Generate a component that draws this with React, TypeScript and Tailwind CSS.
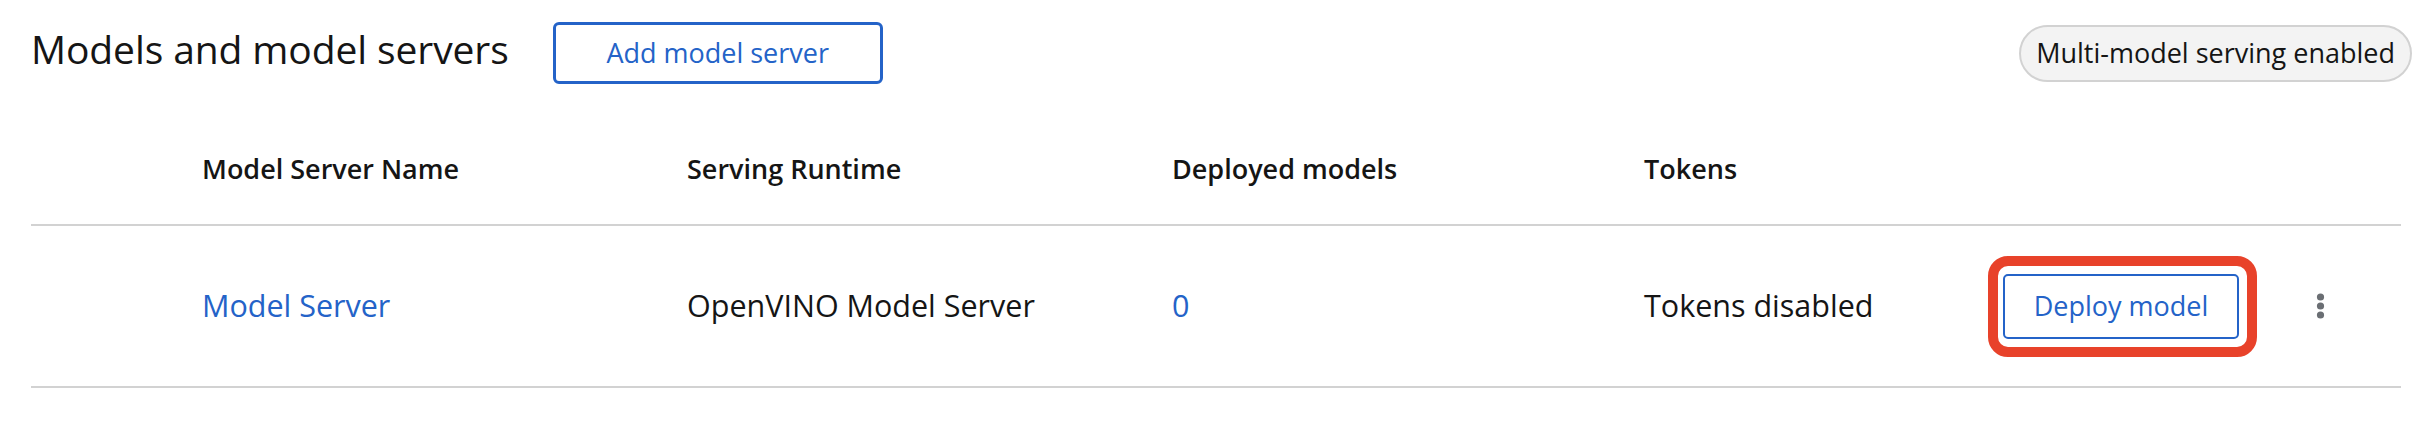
const columns = ["Model Server Name", "Serving Runtime", "Deployed models", "Tokens"];

function KebabIcon() {
  return (
    <svg width="9" height="26" viewBox="0 0 9 26" className="text-[#6a6e73]" fill="currentColor">
      <circle cx="4.5" cy="4" r="3.6" />
      <circle cx="4.5" cy="13" r="3.6" />
      <circle cx="4.5" cy="22" r="3.6" />
    </svg>
  );
}

export default function App() {
  return (
    <div className="min-h-[424px] bg-white pl-[31px] pr-[20px] font-['Open_Sans',sans-serif] text-[#151515]">
      {/* toolbar */}
      <div className="flex h-[84px] items-center pt-[22px]">
        <h2 className="mb-[8px] text-[39px] font-medium tracking-[-0.1px]">Models and model servers</h2>
        <button className="ml-[44px] h-[62px] w-[330px] rounded-[6px] border-[3px] border-[#2463c8] text-[27px] text-[#2463c8]">
          Add model server
        </button>
        <span className="ml-auto flex h-[57px] items-center rounded-full border-2 border-[#d2d2d2] bg-[#f3f3f3] px-[15px] text-[27px]">
          Multi-model serving enabled
        </span>
      </div>

      {/* table */}
      <div className="mr-[11px] mt-[31px]">
        <div className="grid h-[111px] grid-cols-[171px_485px_485px_472px_359px_236px_1fr] items-center border-b-2 border-[#d2d2d2] text-[27px] font-semibold">
          <div />
          {columns.map((c) => (
            <div key={c}>{c}</div>
          ))}
          <div />
          <div />
        </div>

        <div className="grid h-[162px] grid-cols-[171px_485px_485px_472px_359px_236px_1fr] items-center border-b-2 border-[#d2d2d2] text-[30.5px]">
          <div />
          <a className="text-[#2463c8]">Model Server</a>
          <div>OpenVINO Model Server</div>
          <a className="text-[#2463c8]">0</a>
          <div>Tokens disabled</div>
          <div className="relative">
            <button className="h-[65px] w-[236px] rounded-[5px] border-2 border-[#2463c8] text-[27px] text-[#2463c8]">
              Deploy model
            </button>
            <span className="pointer-events-none absolute -bottom-[18px] -left-[15px] -right-[18px] -top-[18px] rounded-[20px] border-[10px] border-[#e8422a]" />
          </div>
          <div className="flex justify-center">
            <KebabIcon />
          </div>
        </div>
      </div>
    </div>
  );
}
